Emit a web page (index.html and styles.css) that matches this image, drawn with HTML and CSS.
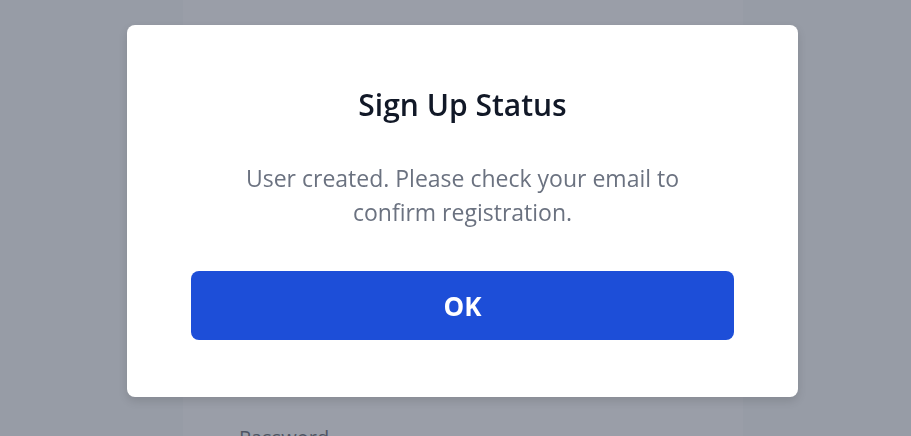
FILE: index.html
```html
<!DOCTYPE html>
<html>
<head>
<meta charset="utf-8">
<link rel="stylesheet" href="styles.css">
</head>
<body>
<main class="page">
  <section class="card">
    <div class="field">
      <label class="label">Password</label>
    </div>
  </section>
</main>
<div class="overlay"></div>
<div class="dialog" role="dialog">
  <h2 class="title">Sign Up Status</h2>
  <p class="message">User created. Please check your email to<br>confirm registration.</p>
  <button class="ok">OK</button>
</div>
</body>
</html>
```

FILE: styles.css
```css
* { box-sizing: border-box; }
html, body { margin: 0; height: 100%; }
body {
  background: #f3f4f6;
  font-family: "Open Sans", "Noto Sans", sans-serif;
  overflow: hidden;
}
.page {
  display: flex;
  justify-content: flex-start;
  padding-left: 183px;
}
.card {
  width: 560px;
  height: 600px;
  background: #fbfbfb;
  padding: 424px 56px 0;
}
.label {
  font-size: 20px;
  line-height: 28px;
  color: #111827;
  font-weight: 500;
}
.overlay {
  position: fixed;
  inset: 0;
  background: rgba(107, 114, 128, 0.68);
}
.dialog {
  position: absolute;
  left: 127px;
  top: 25px;
  width: 671px;
  height: 372px;
  background: #fff;
  border-radius: 8px;
  box-shadow: 0 4px 10px rgba(0,0,0,0.12);
  padding: 60px 64px 0;
  text-align: center;
  display: flex;
  flex-direction: column;
  align-items: stretch;
}
.title {
  margin: 0;
  font-size: 30px;
  line-height: 40px;
  font-weight: 600;
  color: #111827;
}
.message {
  margin: 36px 0 0;
  font-size: 23px;
  line-height: 34px;
  color: #6b7280;
}
.ok {
  margin-top: 42px;
  height: 69px;
  border: none;
  border-radius: 8px;
  background: #1d4ed8;
  color: #fff;
  font-family: inherit;
  font-size: 26px;
  font-weight: 700;
}
```
